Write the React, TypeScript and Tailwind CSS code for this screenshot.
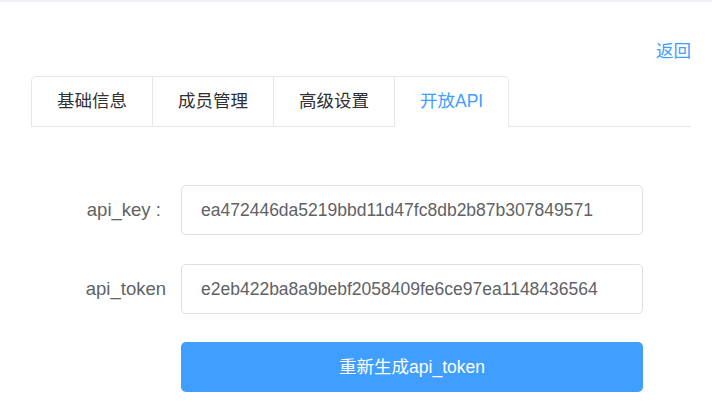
import React from "react";

const FONT = { fontFamily: '"Liberation Sans", "Noto Sans CJK SC", Arial, sans-serif' };

export default function App() {
  const tabs = ["基础信息", "成员管理", "高级设置", "开放API"];
  const active = 3;
  return (
    <div className="w-[712px] h-[403px] bg-white overflow-hidden" style={FONT}>
      <div className="h-[2px] bg-[#eef0f5]" />
      <div className="pl-[31px] pr-[21px]">
        <div className="mt-[37px] flex justify-end">
          <span className="text-[17.5px] leading-[24px] text-[#409eff]">返回</span>
        </div>
        <div className="mt-[13px] h-[51px] border-b border-[#e4e7ed] flex">
          <div className="flex border-l border-t border-r border-[#e4e7ed] rounded-t-[5px] h-[51px]">
            {tabs.map((t, i) => (
              <div
                key={t}
                className={
                  "h-[50px] px-[25px] flex items-center text-[17.5px] border-b " +
                  (i > 0 ? "border-l border-l-[#e4e7ed] " : "") +
                  (i === active ? "text-[#409eff] border-b-white" : "text-[#303133] border-b-[#e4e7ed]")
                }
              >
                {t}
              </div>
            ))}
          </div>
        </div>

        <div className="mt-[58px] flex flex-col">
          <div className="flex items-center">
            <div className="w-[150px] pr-[15px] text-right text-[18.5px] text-[#606266] whitespace-pre">{"api_key :\u00a0"}</div>
            <div className="w-[462px] h-[50px] border border-[#dcdfe6] rounded-[5px] px-[19px] flex items-center text-[17.5px] text-[#606266]">
              ea472446da5219bbd11d47fc8db2b87b307849571
            </div>
          </div>
          <div className="flex items-center mt-[29px]">
            <div className="w-[150px] pr-[15px] text-right text-[18.5px] text-[#606266]">api_token</div>
            <div className="w-[462px] h-[50px] border border-[#dcdfe6] rounded-[5px] px-[19px] flex items-center text-[17.5px] text-[#606266]">
              e2eb422ba8a9bebf2058409fe6ce97ea1148436564
            </div>
          </div>
          <div className="flex items-center mt-[28px]">
            <div className="w-[150px]" />
            <div className="w-[462px] h-[50px] rounded-[5px] bg-[#409eff] flex items-center justify-center text-[17.5px] text-white">
              重新生成api_token
            </div>
          </div>
        </div>
      </div>
    </div>
  );
}
